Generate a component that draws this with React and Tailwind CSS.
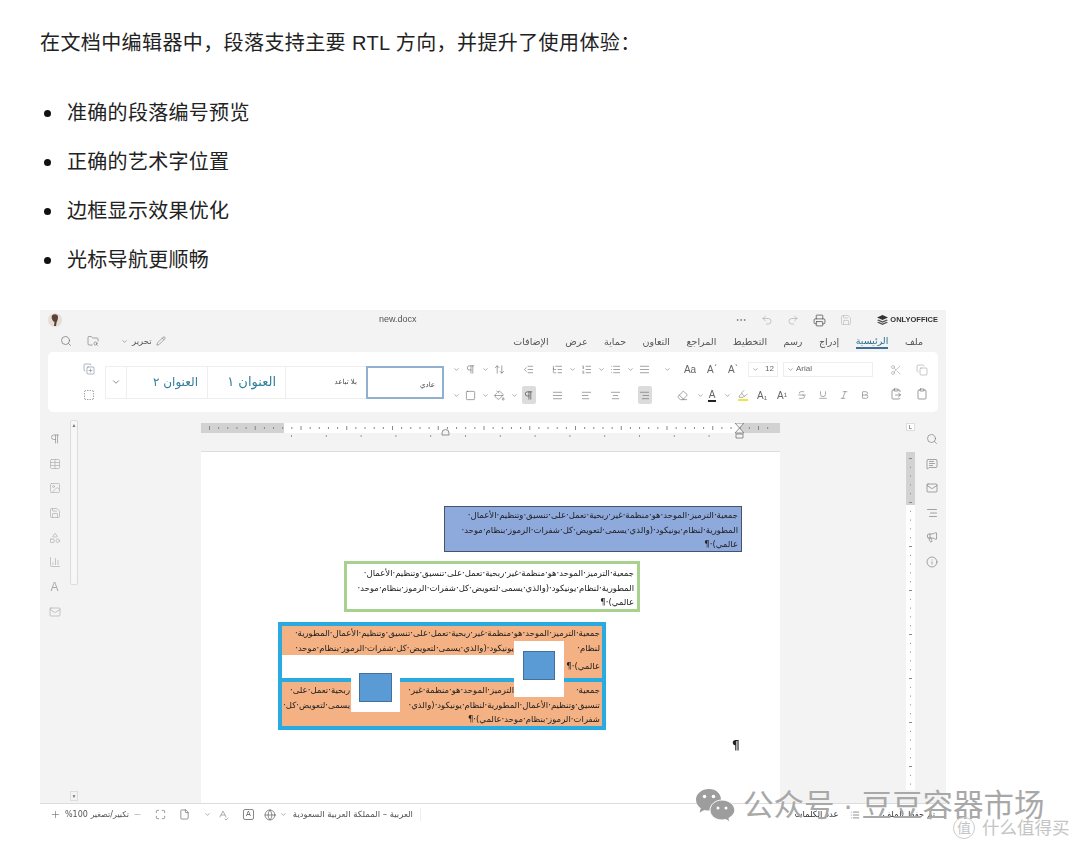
import React from "react";
import {
  Search, FolderSearch, Pencil, ChevronDown, Undo2, Redo2, Printer, Save, Scissors, Copy, Clipboard,
  ClipboardPaste, MessageSquareText, Globe, Info, Megaphone, AlignLeft, AlignRight, AlignCenter, AlignJustify,
  ListOrdered, List, IndentDecrease, ListTree, Table, Image, Shapes, BarChart3, Mail, Square, PaintBucket,
  Eraser, Highlighter, Strikethrough, Underline, Italic, Bold, MoreHorizontal, ArrowUpDown, Plus, Minus,
  Maximize, File, SpellCheck, Pilcrow, CopyPlus, BoxSelect,
} from "lucide-react";

const cjk = "font-['Liberation_Sans','Noto_Sans_CJK_SC',sans-serif]";
const arabic = "font-['DejaVu_Sans','Noto_Sans',sans-serif]";

const tabs = ["ملف", "الرئيسية", "إدراج", "رسم", "التخطيط", "المراجع", "التعاون", "حماية", "عرض", "الإضافات"];
const bullets = ["准确的段落编号预览", "正确的艺术字位置", "边框显示效果优化", "光标导航更顺畅"];

function Chev() {
  return <ChevronDown className="w-[7px] h-[7px] text-[#777]" strokeWidth={2} />;
}

function Ic({ icon: Icon, size = 12, className = "text-[#666]" }) {
  return <Icon className={className} style={{ width: size, height: size }} strokeWidth={1.3} />;
}

function Cell({ children, active }) {
  return (
    <div className={`h-[18px] flex items-center justify-center ${active ? "bg-[#dcdcdc] rounded-[2px]" : ""}`}>
      {children}
    </div>
  );
}

function Ruler() {
  const ticks = Array.from({ length: 62 }, (_, i) => i);
  return (
    <svg width="579" height="18" className="block">
      <rect x="0" y="0" width="579" height="10" fill="#fff" />
      <rect x="0" y="0" width="83" height="10" fill="#d2d2d2" />
      <rect x="539" y="0" width="40" height="10" fill="#d2d2d2" />
      {ticks.map((i) => (
        <rect key={i} x={8 + i * 9.15} y={i % 5 === 0 ? 3 : 4} width="1" height={i % 5 === 0 ? 4 : 2} fill="#888" />
      ))}
      {Array.from({ length: 13 }, (_, i) => (
        <rect key={i} x={90 + i * 34.8} y="12" width="1" height="2" fill="#999" />
      ))}
      <path d="M534 0h9l-4.500 5 4.500 5h-9l4.500-5zM535 11h7v4h-7z" fill="#f4f4f4" stroke="#777" strokeWidth="0.8" />
      <path d="M241 10a3.500 3.500 0 0 1 7 0v2h-7z" fill="#f4f4f4" stroke="#777" strokeWidth="0.8" />
    </svg>
  );
}

function VRuler() {
  const ticks = Array.from({ length: 38 }, (_, i) => i);
  return (
    <svg width="9" height="338" className="block">
      <rect width="9" height="338" fill="#fff" />
      <rect width="9" height="53" fill="#d2d2d2" />
      {ticks.map((i) => (
        <rect key={i} x={i % 5 === 0 ? 3 : 4} y={6 + i * 8.800} width={i % 5 === 0 ? 3 : 1} height="1" fill="#888" />
      ))}
    </svg>
  );
}

function Line({ children, className = "" }) {
  return (
    <div dir="rtl" className={`h-[14.500px] leading-[14.500px] whitespace-nowrap overflow-hidden ${className}`}>
      {children}
    </div>
  );
}

function Ribbon() {
  return (
    <div className="mx-2 h-[60px] bg-white rounded-[5px] flex items-center">
      <div className="w-[57px] pr-[10px] flex flex-col items-end gap-[14px]">
        <Ic icon={CopyPlus} size={12} className="text-[#7b8ea3]" />
        <Ic icon={BoxSelect} size={12} />
      </div>
      <div className={`w-[339px] h-[33px] flex items-stretch text-[#2f7f9b] ${arabic}`}>
        <div className="w-[22px] border border-[#eee] flex items-center justify-center">
          <ChevronDown className="w-[10px] h-[10px] text-[#777]" />
        </div>
        <div dir="rtl" className="w-[80px] border-y border-[#eee] flex items-center pr-[9px] text-[12px]">العنوان ٢</div>
        <div dir="rtl" className="w-[79px] border border-[#eee] flex items-center pr-[9px] text-[13px]">العنوان ١</div>
        <div dir="rtl" className="w-[80px] border-y border-[#eee] flex items-center pr-[9px] text-[7px] text-[#444]">بلا تباعد</div>
        <div dir="rtl" className="w-[78px] border-2 border-[#8fb0cf] flex items-end pb-[6px] pr-[7px] text-[7px] text-[#444]">عادي</div>
      </div>
      <div className="ml-[5px] w-[203px] grid grid-cols-[repeat(14,14.500px)] gap-y-[8px]">
        <Cell><Chev /></Cell>
        <Cell><Ic icon={Pilcrow} size={11} /></Cell>
        <Cell><Chev /></Cell>
        <Cell><Ic icon={ArrowUpDown} size={11} /></Cell>
        <Cell />
        <Cell><Ic icon={IndentDecrease} size={11} /></Cell>
        <Cell />
        <Cell><Ic icon={ListTree} size={11} /></Cell>
        <Cell><Chev /></Cell>
        <Cell><Ic icon={ListOrdered} size={11} /></Cell>
        <Cell><Chev /></Cell>
        <Cell><Ic icon={List} size={11} /></Cell>
        <Cell><Chev /></Cell>
        <Cell><Ic icon={AlignJustify} size={11} /></Cell>

        <Cell><Chev /></Cell>
        <Cell><Ic icon={Square} size={11} /></Cell>
        <Cell><Chev /></Cell>
        <Cell><Ic icon={PaintBucket} size={11} /></Cell>
        <Cell><Chev /></Cell>
        <Cell active><Ic icon={Pilcrow} size={11} className="text-[#333]" /></Cell>
        <Cell />
        <Cell><Ic icon={AlignJustify} size={11} /></Cell>
        <Cell />
        <Cell><Ic icon={AlignLeft} size={11} /></Cell>
        <Cell />
        <Cell><Ic icon={AlignCenter} size={11} /></Cell>
        <Cell />
        <Cell active><Ic icon={AlignRight} size={11} /></Cell>
      </div>
      <div className="ml-[8px] w-[224px] flex flex-col gap-[8px] text-[#666]">
        <div className="h-[18px] flex items-center">
          <div className="w-[14px] flex justify-center"><Chev /></div>
          <span className="w-[32px] text-center text-[10px] font-['Liberation_Sans',sans-serif]">Aa</span>
          <span className="w-[12px] text-center text-[10px] font-['Liberation_Sans',sans-serif]">Aˊ</span>
          <span className="w-[30px] text-center text-[10px] font-['Liberation_Sans',sans-serif]">Aˋ</span>
          <div className="w-[30px] h-[15px] border border-[#eee] flex items-center justify-between px-[3px] text-[8px] font-['Liberation_Sans',sans-serif]">
            <Chev />
            12
          </div>
          <div className="ml-[5px] w-[90px] h-[15px] border border-[#eee] flex items-center gap-[2px] px-[3px] text-[8px] font-['Liberation_Sans',sans-serif]">
            <Chev />
            Arial
          </div>
        </div>
        <div className="h-[18px] flex items-center text-[10px] font-['Liberation_Sans',sans-serif]">
          <div className="ml-[8px] w-[28px] flex justify-center"><Ic icon={Eraser} size={11} /></div>
          <div className="w-[8px] flex justify-center"><Chev /></div>
          <div className="w-[16px] flex justify-center">
            <span className="border-b-2 border-[#222] leading-[11px] px-[1px]">A</span>
          </div>
          <div className="w-[14px] flex justify-center"><Chev /></div>
          <div className="w-[18px] flex justify-center">
            <span className="border-b-2 border-[#f2e24a] leading-[11px]"><Ic icon={Highlighter} size={10} /></span>
          </div>
          <span className="w-[20px] text-center">A₁</span>
          <span className="w-[20px] text-center">A¹</span>
          <div className="w-[20px] flex justify-center"><Ic icon={Strikethrough} size={10} /></div>
          <div className="w-[22px] flex justify-center"><Ic icon={Underline} size={10} /></div>
          <div className="w-[20px] flex justify-center"><Ic icon={Italic} size={10} /></div>
          <div className="w-[22px] flex justify-center"><Ic icon={Bold} size={10} /></div>
        </div>
      </div>
      <div className="ml-[6px] flex flex-col gap-[12px]">
        <div className="flex gap-[14px]">
          <Ic icon={Scissors} size={12} className="text-[#aaa]" />
          <Ic icon={Copy} size={12} className="text-[#aaa]" />
        </div>
        <div className="flex gap-[14px]">
          <Ic icon={ClipboardPaste} size={12} />
          <Ic icon={Clipboard} size={12} />
        </div>
      </div>
    </div>
  );
}

function Doc() {
  return (
    <div className={`flex-1 bg-white border-t border-[#ddd] pt-[54px] text-[8.500px] text-[#222] overflow-hidden ${arabic}`}>
      <div className="ml-[243px] w-[298px] h-[46px] bg-[#8ea9db] border border-[#44546a] px-[3px] pt-[1px]">
        <Line>جمعية·الترميز·الموحد·هو·منظمة·غير·ربحية·تعمل·على·تنسيق·وتنظيم·الأعمال·</Line>
        <Line>المطورية·لنظام·يونيكود·(والذي·يسمى·لتعويض·كل·شفرات·الرموز·بنظام·موحد·</Line>
        <Line>عالمي)·¶</Line>
      </div>
      <div className="mt-[9px] ml-[143px] w-[296px] h-[51px] border-[3px] border-[#a9d18e] px-[3px] pt-[2px]">
        <Line>جمعية·الترميز·الموحد·هو·منظمة·غير·ربحية·تعمل·على·تنسيق·وتنظيم·الأعمال·</Line>
        <Line>المطورية·لنظام·يونيكود·(والذي·يسمى·لتعويض·كل·شفرات·الرموز·بنظام·موحد·</Line>
        <Line>عالمي)·¶</Line>
      </div>
      <div className="relative mt-[10px] ml-[77px] w-[328px] h-[108px] border-4 border-[#29abe2]">
        <div className="h-[52px] flex flex-col">
          <div className="bg-[#f4b183] px-[2px]">
            <Line>جمعية·الترميز·الموحد·هو·منظمة·غير·ربحية·تعمل·على·تنسيق·وتنظيم·الأعمال·المطورية·</Line>
            <Line className="flex">
              <span className="w-[86px] shrink-0">لنظام·</span>
              <span>يونيكود·(والذي·يسمى·لتعويض·كل·شفرات·الرموز·بنظام·موحد·</span>
            </Line>
          </div>
          <div className="flex-1 flex">
            <div className="flex-1 bg-white" />
            <div className="w-[38px] bg-[#f4b183] px-[2px] pt-[4px]">
              <Line>عالمي)·¶</Line>
            </div>
          </div>
        </div>
        <div className="h-[4px] bg-[#29abe2]" />
        <div className="h-[44px] bg-[#f4b183] px-[2px] pt-[1px]">
          <Line className="flex">
            <span className="w-[86px] shrink-0">جمعية·</span>
            <span className="w-[164px] shrink-0">الترميز·الموحد·هو·منظمة·غير·</span>
            <span>ربحية·تعمل·على·</span>
          </Line>
          <Line className="flex">
            <span className="w-[250px] shrink-0">تنسيق·وتنظيم·الأعمال·المطورية·لنظام·يونيكود·(والذي·</span>
            <span>يسمى·لتعويض·كل·</span>
          </Line>
          <Line>شفرات·الرموز·بنظام·موحد·عالمي)·¶</Line>
        </div>
        <div className="absolute left-[232px] top-[15px] w-[50px] h-[56px] bg-white flex items-start justify-center pt-[10px]">
          <div className="w-[32px] h-[29px] bg-[#5b9bd5] border border-[#41719c]" />
        </div>
        <div className="absolute left-[69px] top-[36px] w-[49px] h-[50px] bg-white flex items-center justify-center">
          <div className="w-[33px] h-[29px] bg-[#5b9bd5] border border-[#41719c]" />
        </div>
      </div>
      <div className="mt-[8px] ml-[531px] text-[12px] font-bold leading-[14px]">¶</div>
    </div>
  );
}

export default function App() {
  return (
    <div className={`relative h-[848px] bg-white overflow-hidden ${cjk}`}>
      <div className="px-[40px] pt-[30px]">
        <p className="text-[20px] leading-[26px] tracking-[0.400px] text-[#222]">
          在文档中编辑器中，段落支持主要 RTL 方向，并提升了使用体验：
        </p>
        <ul className="mt-[44px] flex flex-col gap-[23px]">
          {bullets.map((t) => (
            <li key={t} className="h-[26px] flex items-center text-[20px] tracking-[0.300px] text-[#222]">
              <span className="w-[7px] h-[7px] ml-[4px] mr-[16px] rounded-full bg-[#111]" />
              {t}
            </li>
          ))}
        </ul>

        <div className="mt-[37px] w-[906px] h-[515px] bg-[#f3f3f3] flex flex-col blur-[0.500px]">
          <div className="h-[20px] flex items-center pl-[8px] pr-[8px] text-[#555]">
            <svg width="14" height="14" viewBox="0 0 14 14" className="shrink-0">
              <circle cx="7" cy="7" r="7" fill="#e6ddd6" />
              <path d="M4 2.500C6 .5 10 1 10 4c0 3-1 4-1.500 5.500L8 13H6l.5-4C4.500 8 3 5 4 2.500z" fill="#5a4036" />
            </svg>
            <div className="ml-[317px] text-[9px]">new.docx</div>
            <div className="ml-auto flex items-center gap-[14px]">
              <Ic icon={MoreHorizontal} size={12} />
              <Ic icon={Undo2} size={12} className="text-[#aaa]" />
              <Ic icon={Redo2} size={12} className="text-[#aaa]" />
              <Ic icon={Printer} size={13} className="text-[#444]" />
              <Ic icon={Save} size={12} className="text-[#bbb]" />
            </div>
            <div className="ml-[25px] flex items-center gap-[2px] text-[7.500px] font-bold text-[#333]">
              <svg width="11" height="10" viewBox="0 0 11 10">
                <path d="M5.500 0 11 2.500 5.500 5 0 2.500z" fill="#333" />
                <path d="M1.500 4.500 5.500 6.300 9.500 4.500 11 5.200 5.500 7.700 0 5.200zM1.500 6.800 5.500 8.600 9.500 6.800 11 7.500 5.500 10 0 7.500z" fill="#555" />
              </svg>
              ONLYOFFICE
            </div>
          </div>

          <div className={`h-[22px] flex items-center pl-[20px] pr-[23px] text-[9.500px] text-[#555] ${arabic}`}>
            <Ic icon={Search} size={12} />
            <Ic icon={FolderSearch} size={12} className="text-[#777] ml-[15px]" />
            <div className="ml-[22px] flex items-center gap-[4px] text-[8.500px]">
              <Chev />
              <span>تحرير</span>
              <Ic icon={Pencil} size={10} />
            </div>
            <div dir="rtl" className="ml-auto flex items-center gap-[16.500px]">
              {tabs.map((t, i) => (
                <span key={t} className={i === 1 ? "text-[#2f6f8f] border-b-2 border-[#3d6f96] leading-[13px]" : "leading-[15px]"}>
                  {t}
                </span>
              ))}
            </div>
          </div>

          <Ribbon />

          <div className="flex-1 flex min-h-0">
            <div className="w-[29px] pt-[21px] flex flex-col items-center gap-[12.700px]">
              <Ic icon={Pilcrow} size={12} className="text-[#888]" />
              <Ic icon={Table} size={12} className="text-[#aaa]" />
              <Ic icon={Image} size={12} className="text-[#aaa]" />
              <Ic icon={Save} size={12} className="text-[#aaa]" />
              <Ic icon={Shapes} size={12} className="text-[#aaa]" />
              <Ic icon={BarChart3} size={12} className="text-[#aaa]" />
              <span className="h-[12px] text-[12px] leading-[12px] text-[#aaa]">A</span>
              <Ic icon={Mail} size={12} className="text-[#aaa]" />
            </div>
            <div className="ml-[1px] w-[8px] pt-[8px] pb-[2px] flex flex-col justify-between">
              <div className="h-[165px] bg-[#f7f7f7] border border-[#ddd] rounded-[2px] flex flex-col items-center">
                <span className="text-[5px] leading-[8px] text-[#777]">▲</span>
              </div>
              <span className="text-[5px] leading-[8px] text-center text-[#777] border border-[#ddd]">▼</span>
            </div>
            <div className="ml-[123px] w-[579px] pt-[11px] flex flex-col">
              <Ruler />
              <div className="mt-[10px] flex-1 flex min-h-0">
                <Doc />
              </div>
            </div>
            <div className="ml-[126px] w-[9px] pt-[11px] flex flex-col">
              <div className="h-[8px] w-[9px] bg-white border border-[#ddd] text-[5px] leading-[6px] text-center text-[#333]">L</div>
              <div className="mt-[21px]">
                <VRuler />
              </div>
            </div>
            <div className="flex-1 pt-[21px] flex flex-col items-center gap-[12.500px] pl-[2px]">
              <Ic icon={Search} size={12} className="text-[#777]" />
              <Ic icon={MessageSquareText} size={12} className="text-[#777]" />
              <Ic icon={Mail} size={12} className="text-[#777]" />
              <Ic icon={AlignRight} size={12} className="text-[#777]" />
              <Ic icon={Megaphone} size={12} className="text-[#777]" />
              <Ic icon={Info} size={12} className="text-[#777]" />
            </div>
          </div>

          <div className={`h-[22px] bg-white border-t border-[#ddd] flex items-center pl-[10px] pr-[11px] text-[8.500px] text-[#555] ${arabic}`}>
            <Ic icon={Plus} size={11} />
            <span className="ml-[4px] whitespace-nowrap text-[8px]">%100 تكبير/تصغير</span>
            <Ic icon={Minus} size={9} className="text-[#888] ml-[4px]" />
            <Ic icon={Maximize} size={11} className="ml-[13px]" />
            <Ic icon={File} size={11} className="ml-[13px]" />
            <div className="ml-[14px]"><Chev /></div>
            <Ic icon={SpellCheck} size={12} className="ml-[6px] text-[#888]" />
            <div className="ml-[14px] w-[11px] h-[11px] border border-[#888] rounded-[2px] text-[7px] leading-[9px] text-center">A</div>
            <Ic icon={Globe} size={12} className="ml-[10px]" />
            <div className="ml-[4px]"><Chev /></div>
            <span className="ml-[6px] pr-[7px] border-r border-[#eee] whitespace-nowrap">العربية – المملكة العربية السعودية</span>
            <span className="ml-auto whitespace-nowrap text-[#333]">عدد الكلمات</span>
            <Ic icon={List} size={10} className="ml-[12px] text-[#333]" />
            <span className="ml-[22px] whitespace-nowrap text-[#333]">تم حفظ الملف</span>
          </div>
        </div>
      </div>

      <div className="absolute left-[695px] top-[787px] flex items-center gap-[7px] text-[30.500px] leading-[36px] whitespace-nowrap text-[#a8a8a8]">
        <svg width="41" height="35" viewBox="0 0 41 35" className="shrink-0">
          <path d="M14 1C6.800 1 1 5.800 1 11.800c0 3.400 1.900 6.400 4.800 8.400L4.500 24.500l5-2.600c1.400.4 2.900.6 4.500.6 7.200 0 12-4.800 12-10.700S21.200 1 14 1z" fill="#9d9d9d" />
          <path d="M27 12c-6.600 0-12 4.600-12 10.200S20.400 32 27 32c1.300 0 2.600-.2 3.700-.5l4.300 2.500-1.100-3.800c3.300-1.900 5.900-4.900 5.900-7.900C39.800 16.600 33.600 12 27 12z" fill="#9d9d9d" stroke="#fff" strokeWidth="1" />
          <circle cx="9.500" cy="8.500" r="1.800" fill="#fff" />
          <circle cx="18.500" cy="8.500" r="1.800" fill="#fff" />
          <circle cx="23" cy="20" r="1.500" fill="#fff" />
          <circle cx="31" cy="20" r="1.500" fill="#fff" />
        </svg>
        <span>公众号 · 豆豆容器市场</span>
      </div>
      <div className="absolute left-[953px] top-[816px] flex items-center gap-[7px] text-[#c4c4c4] whitespace-nowrap">
        <span className="w-[22px] h-[22px] rounded-full border border-[#ccc] text-[14px] leading-[20px] text-center">值</span>
        <span className="text-[17.500px] leading-[24px]">什么值得买</span>
      </div>
    </div>
  );
}
